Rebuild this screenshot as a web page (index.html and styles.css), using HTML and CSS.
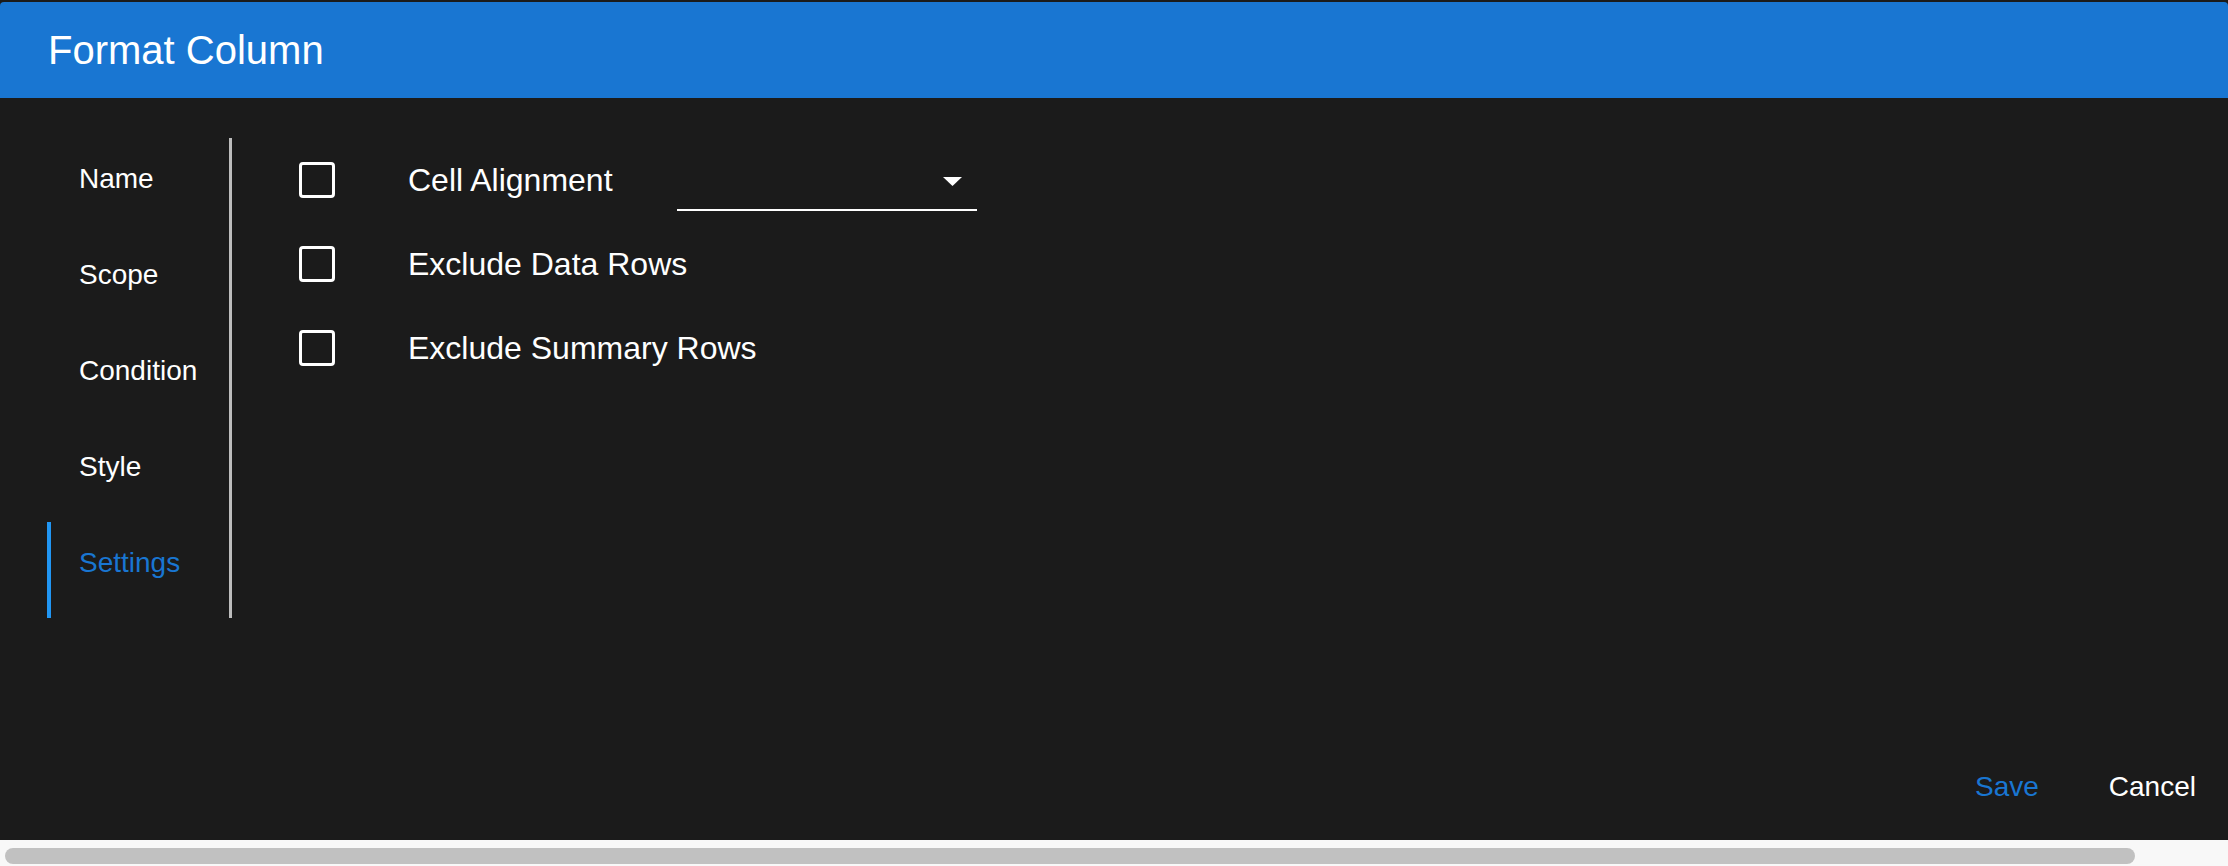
FILE: index.html
```html
<!DOCTYPE html>
<html>
<head>
  <title>Format Column</title>
  <link rel="stylesheet" href="styles.css">
</head>
<body>
  <div class="page">
    <div class="dialog">
      <div class="dialog-title">Format Column</div>
      <div class="dialog-body">
        <div class="dialog-main">
          <div class="tabs">
            <div class="tab">Name</div>
            <div class="tab">Scope</div>
            <div class="tab">Condition</div>
            <div class="tab">Style</div>
            <div class="tab active">Settings</div>
          </div>
          <div class="settings">
            <div class="row">
              <div class="checkbox"></div>
              <div class="label">Cell Alignment</div>
              <div class="select">
                <svg width="19" height="9" viewBox="0 0 19 9"><path d="M0 0h19L9.5 9z" fill="#fff"/></svg>
              </div>
            </div>
            <div class="row">
              <div class="checkbox"></div>
              <div class="label">Exclude Data Rows</div>
            </div>
            <div class="row">
              <div class="checkbox"></div>
              <div class="label">Exclude Summary Rows</div>
            </div>
          </div>
        </div>
        <div class="dialog-actions">
          <div class="button primary">Save</div>
          <div class="button">Cancel</div>
        </div>
      </div>
    </div>
    <div class="scrollbar">
      <div class="thumb"></div>
    </div>
  </div>
</body>
</html>
```

FILE: styles.css
```css
body {
  margin: 0;
  background-color: #1b1b1b;
  font-family: "Liberation Sans", Arial, sans-serif;
  color: #fff;
  overflow: hidden;
}

.page {
  height: 866px;
  padding-top: 2px;
  box-sizing: border-box;
  display: flex;
  flex-direction: column;
}

.dialog {
  border-radius: 4px 4px 0 0;
  overflow: hidden;
}

.dialog-title {
  height: 96px;
  background-color: #1976d2;
  display: flex;
  align-items: center;
  padding-left: 48px;
  font-size: 40px;
}

.dialog-body {
  height: 742px;
  background-color: #1b1b1b;
  display: flex;
  flex-direction: column;
}

.dialog-main {
  display: flex;
  padding: 40px 0 0 47px;
}

.tabs {
  width: 182px;
  border-right: 3px solid #bdbdbd;
}

.tab {
  height: 96px;
  box-sizing: border-box;
  padding: 25px 0 0 28px;
  border-left: 4px solid transparent;
  font-size: 28px;
  line-height: 32px;
  cursor: pointer;
}

.tab.active {
  border-left-color: #2196f3;
  color: #1976d2;
}

.settings {
  padding-left: 67px;
}

.row {
  height: 84px;
  display: flex;
  align-items: center;
}

.checkbox {
  width: 36px;
  height: 36px;
  box-sizing: border-box;
  border: 3px solid #fff;
  border-radius: 4px;
}

.label {
  margin-left: 73px;
  font-size: 32px;
  line-height: 36px;
}

.select {
  width: 300px;
  height: 62px;
  box-sizing: border-box;
  margin-left: 64px;
  border-bottom: 2px solid #fff;
  display: flex;
  justify-content: flex-end;
  align-items: center;
  padding: 4px 15px 0 0;
}

.select svg {
  display: block;
}

.dialog-actions {
  margin-top: auto;
  display: flex;
  justify-content: flex-end;
  gap: 70px;
  padding: 0 32px 37px 0;
}

.button {
  font-size: 28px;
  line-height: 32px;
  cursor: pointer;
}

.button.primary {
  color: #1976d2;
}

.scrollbar {
  flex: 1;
  background-color: #f8f8f8;
  padding: 8px 0 0 5px;
  box-sizing: border-box;
}

.thumb {
  width: 2130px;
  height: 16px;
  border-radius: 8px;
  background-color: #c1c1c1;
}
```
